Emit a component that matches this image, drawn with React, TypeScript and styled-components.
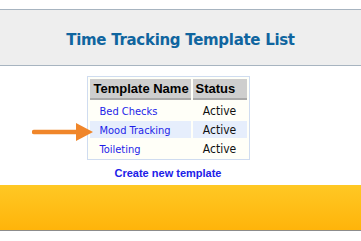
import * as React from "react";
import styled, { createGlobalStyle } from "styled-components";

const GlobalStyle = createGlobalStyle`
  html, body {
    margin: 0;
    padding: 0;
    background: #ffffff;
  }
  body {
    font-family: "Liberation Sans", Arial, sans-serif;
  }
`;

const Page = styled.div`
  width: 361px;
  height: 241px;
  padding-top: 9px;
  box-sizing: border-box;
  overflow: hidden;
`;

const Header = styled.div`
  height: 57px;
  box-sizing: border-box;
  padding-top: 4px;
  display: flex;
  align-items: center;
  justify-content: center;
  background: #eeeeee;
  border-top: 1px solid #a7b4c0;
  border-bottom: 1px solid #a7b4c0;
`;

const Title = styled.h1`
  margin: 0;
  font-family: "DejaVu Sans", Verdana, sans-serif;
  font-size: 15px;
  font-weight: bold;
  letter-spacing: -0.3px;
  color: #10659f;
`;

const Body = styled.div`
  position: relative;
  display: flex;
  flex-direction: column;
  align-items: center;
  padding: 10px 25px 0 0;
`;

const Table = styled.table`
  border: 1px solid #cfdcf0;
  border-spacing: 2px;
  background: #fffff8;
  padding: 0;
`;

const HeadCell = styled.th<{ $w: number; $pad: number }>`
  width: ${(p) => p.$w}px;
  box-sizing: border-box;
  background: #cecece;
  border-bottom: 2px solid #a9a9a9;
  font-family: "Liberation Sans", Arial, sans-serif;
  font-size: 13px;
  font-weight: bold;
  color: #000000;
  text-align: left;
  padding: 0 0 0 ${(p) => p.$pad}px;
  height: 21px;
  line-height: 19px;
  white-space: nowrap;
`;

const Row = styled.tr<{ $highlight?: boolean }>`
  background: ${(p) => (p.$highlight ? "#e6eefc" : "transparent")};
`;

const NameCell = styled.td`
  font-family: "DejaVu Sans Condensed", "DejaVu Sans", sans-serif;
  font-size: 11px;
  color: #1e1ee8;
  padding: 2px 0 0 10px;
  height: 15px;
  line-height: 15px;
  white-space: nowrap;
`;

const StatusCell = styled.td`
  font-family: "DejaVu Sans Condensed", "DejaVu Sans", sans-serif;
  font-size: 12px;
  color: #111111;
  text-align: center;
  padding: 2px 0 0 0;
  line-height: 15px;
`;

const CreateLink = styled.a`
  margin-top: 7px;
  font-family: "Liberation Sans", Arial, sans-serif;
  font-size: 11px;
  font-weight: bold;
  line-height: 13px;
  color: #2020e8;
  text-decoration: none;
`;

const Arrow = styled.svg`
  position: absolute;
  left: 32px;
  top: 56px;
`;

const Band = styled.div`
  margin-top: 5px;
  height: 45px;
  background: linear-gradient(#ffc824, #ffb40a);
  border-bottom: 1px solid #8c8c8c;
`;

const templates = [
  { name: "Bed Checks", status: "Active" },
  { name: "Mood Tracking", status: "Active", highlight: true },
  { name: "Toileting", status: "Active" },
];

export default function App() {
  return (
    <Page>
      <GlobalStyle />
      <Header>
        <Title>Time Tracking Template List</Title>
      </Header>
      <Body>
        <Table>
          <thead>
            <tr>
              <HeadCell $w={101} $pad={4}>Template Name</HeadCell>
              <HeadCell $w={54} $pad={3}>Status</HeadCell>
            </tr>
          </thead>
          <tbody>
            {templates.map((t) => (
              <Row key={t.name} $highlight={t.highlight}>
                <NameCell>{t.name}</NameCell>
                <StatusCell>{t.status}</StatusCell>
              </Row>
            ))}
          </tbody>
        </Table>
        <CreateLink href="#">Create new template</CreateLink>
        <Arrow width="62" height="20" viewBox="0 0 62 20">
          <line x1="2" y1="10" x2="48" y2="10" stroke="#f0862a" strokeWidth="4.5" strokeLinecap="round" />
          <polygon points="44,1 61,10 44,19" fill="#f0862a" />
        </Arrow>
      </Body>
      <Band />
    </Page>
  );
}
